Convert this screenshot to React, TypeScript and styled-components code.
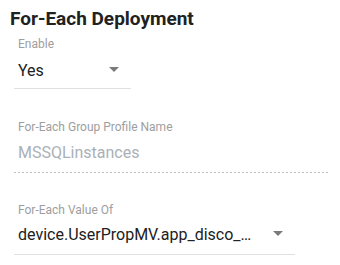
import React from "react"
import styled, { createGlobalStyle } from "styled-components"

const GlobalStyle = createGlobalStyle`
  body {
    margin: 0;
    background: #fff;
    font-family: Roboto, "Liberation Sans", sans-serif;
  }
`

const Panel = styled.div`
  width: 340px;
  height: 265px;
  padding: 7px 0 0 10px;
  box-sizing: border-box;
  display: flex;
  flex-direction: column;
`

const Title = styled.h2`
  margin: 0;
  font-size: 19px;
  line-height: 24px;
  font-weight: 700;
  color: #212121;
`

const Field = styled.div<{ $width: number; $top: number }>`
  display: flex;
  flex-direction: column;
  width: ${(p) => p.$width}px;
  margin: ${(p) => p.$top}px 0 0 4px;
`

const Label = styled.div`
  padding-left: 4px;
  font-size: 12px;
  line-height: 14px;
  color: #9e9e9e;
`

const ValueRow = styled.div<{ $gap: number; $disabled?: boolean }>`
  display: flex;
  align-items: center;
  height: 20px;
  margin-top: ${(p) => p.$gap}px;
  padding: 0 12px 0 4px;
  font-size: 16px;
  color: ${(p) => (p.$disabled ? "#aab0b8" : "#212121")};
`

const ValueText = styled.span`
  flex: 1;
  min-width: 0;
  white-space: nowrap;
  overflow: hidden;
  text-overflow: ellipsis;
`

const Arrow = styled.span`
  flex: none;
  margin-left: 14px;
  margin-top: -1px;
  width: 0;
  height: 0;
  border-left: 5px solid transparent;
  border-right: 5px solid transparent;
  border-top: 5px solid #7a7a7a;
`

const Underline = styled.div<{ $gap: number; $dotted?: boolean }>`
  margin-top: ${(p) => p.$gap}px;
  height: 1px;
  background: ${(p) =>
    p.$dotted
      ? "repeating-linear-gradient(to right, #bdbdbd 0 2px, transparent 2px 4px)"
      : "#e0e0e0"};
`

const App: React.FC = () => {
  return (
    <Panel>
      <GlobalStyle />
      <Title>For-Each Deployment</Title>

      <Field $width={117} $top={6}>
        <Label>Enable</Label>
        <ValueRow $gap={9}>
          <ValueText>Yes</ValueText>
          <Arrow />
        </ValueRow>
        <Underline $gap={8} />
      </Field>

      <Field $width={314} $top={31}>
        <Label>For-Each Group Profile Name</Label>
        <ValueRow $gap={8} $disabled>
          <ValueText>MSSQLinstances</ValueText>
        </ValueRow>
        <Underline $gap={10} $dotted />
      </Field>

      <Field $width={281} $top={30}>
        <Label>For-Each Value Of</Label>
        <ValueRow $gap={7}>
          <ValueText>device.UserPropMV.app_disco_mssql_instances</ValueText>
          <Arrow />
        </ValueRow>
        <Underline $gap={10} />
      </Field>
    </Panel>
  )
}

export default App
